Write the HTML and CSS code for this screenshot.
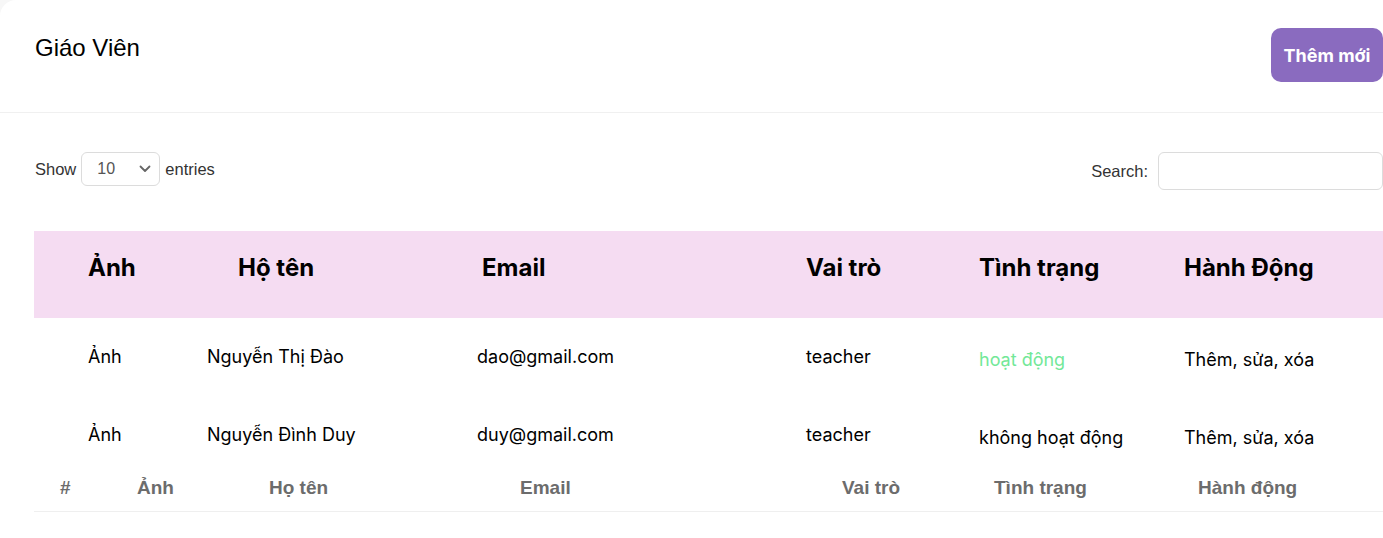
FILE: index.html
```html
<!DOCTYPE html>
<html lang="vi">
<head>
<meta charset="utf-8">
<title>Giáo Viên</title>
<link rel="stylesheet" href="styles.css">
</head>
<body>
<div class="card">
  <div class="card-header">
    <h1 class="title">Giáo Viên</h1>
    <button class="btn-add">Thêm mới</button>
  </div>
  <div class="card-body">
    <div class="controls">
      <label class="length">Show
        <span class="select">10
          <svg class="chev" width="12" height="8" viewBox="0 0 12 8"><path d="M1.5 1.5 L6 6 L10.5 1.5" fill="none" stroke="#666" stroke-width="1.8" stroke-linecap="round" stroke-linejoin="round"/></svg>
        </span>
        entries</label>
      <label class="search">Search: <span class="search-input"></span></label>
    </div>
    <div class="table">
      <div class="row head">
        <div>Ảnh</div><div>Hộ tên</div><div>Email</div><div>Vai trò</div><div>Tình trạng</div><div>Hành Động</div>
      </div>
      <div class="row body">
        <div>Ảnh</div><div>Nguyễn Thị Đào</div><div>dao@gmail.com</div><div>teacher</div><div class="low active">hoạt động</div><div class="low">Thêm, sửa, xóa</div>
      </div>
      <div class="row body">
        <div>Ảnh</div><div>Nguyễn Đình Duy</div><div>duy@gmail.com</div><div>teacher</div><div class="low">không hoạt động</div><div class="low">Thêm, sửa, xóa</div>
      </div>
      <div class="row foot">
        <div>#</div><div>Ảnh</div><div>Họ tên</div><div>Email</div><div>Vai trò</div><div>Tình trạng</div><div>Hành động</div>
      </div>
    </div>
  </div>
</div>
</body>
</html>
```
FILE: styles.css
```css
html, body {
  margin: 0;
  padding: 0;
  background: #f7f7f7;
  overflow: hidden;
}
.card {
  background: #fff;
  border-top-left-radius: 16px;
  min-height: 538px;
  font-family: "Liberation Sans", Arial, sans-serif;
  color: #000;
}
.card-header {
  height: 113px;
  box-sizing: border-box;
  border-bottom: 1px solid #f0f0f0;
  display: flex;
  justify-content: space-between;
  align-items: flex-start;
  padding: 28px 0 0 35px;
}
.title {
  margin: 6px 0 0;
  font-weight: normal;
  font-size: 24px;
  line-height: 27px;
}
.btn-add {
  width: 112px;
  height: 54px;
  border: none;
  border-radius: 10px;
  background: #8a6bbf;
  color: #fff;
  font-family: Inter, sans-serif;
  font-weight: 700;
  font-size: 18px;
  padding: 0;
}
.card-body {
  padding: 39px 0 0 34px;
}
.controls {
  display: flex;
  justify-content: space-between;
  align-items: flex-start;
  padding-left: 1px;
  font-size: 16.5px;
  color: #333;
}
.length, .search {
  display: flex;
  align-items: center;
  gap: 5px;
}
.select {
  width: 79px;
  height: 34px;
  box-sizing: border-box;
  border: 1px solid #dcdcdc;
  border-radius: 6px;
  display: flex;
  align-items: center;
  justify-content: space-between;
  padding: 0 8px 0 15px;
  color: #555;
  font-size: 16px;
}
.chev { display: block; }
.search { gap: 10px; }
.search-input {
  display: block;
  width: 225px;
  height: 38px;
  box-sizing: border-box;
  border: 1px solid #dcdcdc;
  border-radius: 6px;
}
.table {
  margin-top: 41px;
}
.row {
  display: grid;
}
.head {
  background: #f5dcf2;
  height: 87px;
  box-sizing: border-box;
  padding: 22px 0 0 54px;
  grid-template-columns: 150px 244px 324px 173px 205px 1fr;
  font-family: Inter, sans-serif;
  font-weight: 700;
  font-size: 24px;
  line-height: 29px;
}
.body {
  height: 78px;
  box-sizing: border-box;
  padding: 28px 0 0 54px;
  grid-template-columns: 119px 270px 329px 173px 205px 1fr;
  font-family: Inter, sans-serif;
  font-size: 18px;
  line-height: 22px;
}
.body .low { padding-top: 3px; }
.body .active { color: #72e898; }
.foot {
  height: 38px;
  box-sizing: border-box;
  padding: 3px 0 0 26px;
  border-bottom: 1px solid #efefef;
  grid-template-columns: 77px 132px 251px 322px 152px 204px 1fr;
  font-weight: 700;
  font-size: 19px;
  line-height: 22px;
  color: #6c6c6c;
}
```
